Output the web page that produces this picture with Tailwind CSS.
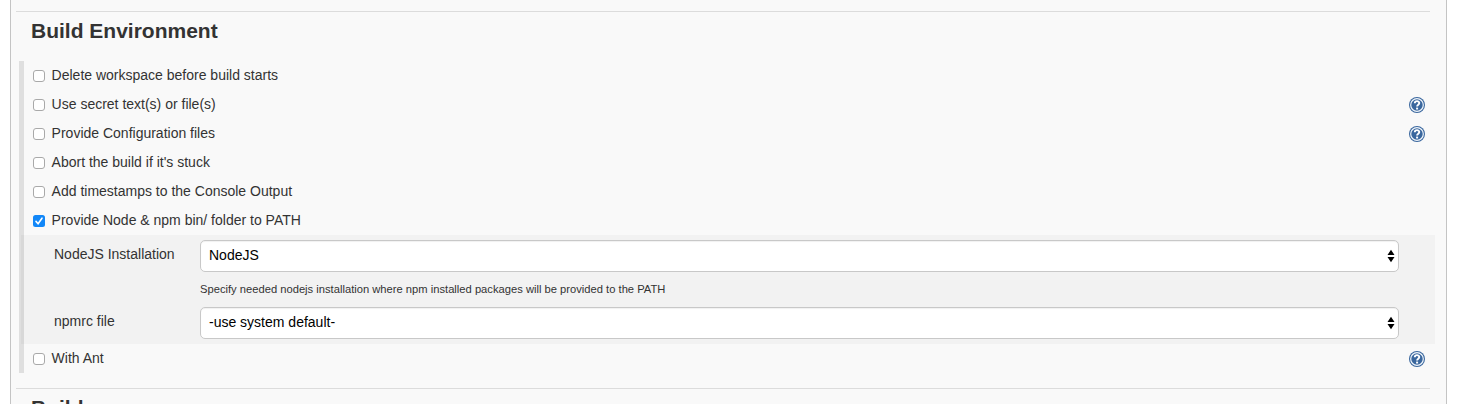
<!DOCTYPE html>
<html lang="en">
<head>
<meta charset="utf-8">
<title>Build Environment</title>
<script src="https://cdn.jsdelivr.net/npm/@tailwindcss/browser@4"></script>
</head>
<body class="bg-white h-[404px] overflow-hidden font-['Liberation_Sans',Arial,sans-serif] text-[14px] text-[#333]">
<svg class="hidden">
  <defs>
    <linearGradient id="blue" x1="0" y1="0" x2="0" y2="1"><stop offset="0" stop-color="#7fa3cb"/><stop offset=".5" stop-color="#3a6aa5"/><stop offset="1" stop-color="#24508c"/></linearGradient>
    <symbol id="help" viewBox="0 0 16 16">
      <circle cx="8" cy="8" r="8" fill="#3a679e"/>
      <circle cx="8" cy="8" r="6.3" fill="url(#blue)" stroke="#f0f5fa" stroke-width="1.2"/>
      <path d="M5.8 6.2C5.8 3.5 10.3 3.5 10.3 6.1C10.3 7.7 8.1 7.7 8.1 9.6" fill="none" stroke="#fff" stroke-width="1.9"/>
      <rect x="7.1" y="10.6" width="2" height="1.9" fill="#fff"/>
    </symbol>
    <symbol id="arrows" viewBox="0 0 8 14"><path d="M4 .8L7.5 6H.5ZM4 13.2L.5 8H7.5Z" fill="#000"/></symbol>
  </defs>
</svg>
<main class="ml-[10px] w-[1437px] h-[404px] overflow-hidden bg-[#f9f9f9] border-x border-[#c4c4c4] pt-[11px]">
  <hr class="ml-[5px] w-[1414px] border-t border-[#dcdcdc]">
  <h2 class="ml-[20px] h-[49px] pt-[7px] text-[21px] leading-[24px] font-bold whitespace-nowrap">Build Environment</h2>
  <section class="ml-[8px] w-[1416px] h-[312px] bg-[linear-gradient(90deg,#dfdfdf_5px,transparent_5px)]">
    <div class="h-[29px] pl-[14px] pr-[10px] flex items-center"><span class="mt-px size-[12px] rounded-[3px] border border-[#a9a9a9] bg-white"></span><label class="ml-[6.6px] flex-1">Delete workspace before build starts</label></div>
    <div class="h-[29px] pl-[14px] pr-[10px] flex items-center"><span class="mt-px size-[12px] rounded-[3px] border border-[#a9a9a9] bg-white"></span><label class="ml-[6.6px] flex-1">Use secret text(s) or file(s)</label><svg class="size-4 mt-px"><use href="#help"/></svg></div>
    <div class="h-[29px] pl-[14px] pr-[10px] flex items-center"><span class="mt-px size-[12px] rounded-[3px] border border-[#a9a9a9] bg-white"></span><label class="ml-[6.6px] flex-1">Provide Configuration files</label><svg class="size-4 mt-px"><use href="#help"/></svg></div>
    <div class="h-[29px] pl-[14px] pr-[10px] flex items-center"><span class="mt-px size-[12px] rounded-[3px] border border-[#a9a9a9] bg-white"></span><label class="ml-[6.6px] flex-1">Abort the build if it's stuck</label></div>
    <div class="h-[29px] pl-[14px] pr-[10px] flex items-center"><span class="mt-px size-[12px] rounded-[3px] border border-[#a9a9a9] bg-white"></span><label class="ml-[6.6px] flex-1">Add timestamps to the Console Output</label></div>
    <div class="h-[29px] pl-[14px] pr-[10px] flex items-center"><svg class="mt-px size-[12px]" viewBox="0 0 12 12"><rect width="12" height="12" rx="2.5" fill="#1287f8"/><path d="M3 6.4L5.1 8.8L9 3.2" fill="none" stroke="#fff" stroke-width="1.6" stroke-linecap="round"/></svg><label class="ml-[6.6px] flex-1">Provide Node &amp; npm bin/ folder to PATH</label></div>
    <div class="ml-[2px] h-[109px] bg-black/[.027] pl-[33px] pr-[36px] pt-[5px]">
      <div class="flex h-[32px]"><div class="w-[146px] pt-[4px]">NodeJS Installation</div><div class="flex-1 bg-white border border-[#c8c8c8] rounded-[5px] flex items-center justify-between pl-[8px] pr-[3px] text-black shadow-[inset_0_1px_1px_rgba(0,0,0,.06)]"><span class="pb-[2px]">NodeJS</span><svg class="w-[8px] h-[14px]"><use href="#arrows"/></svg></div></div>
      <div class="ml-[146px] h-[35px] pt-[10px] text-[11.2px] leading-[15px]">Specify needed nodejs installation where npm installed packages will be provided to the PATH</div>
      <div class="flex h-[32px]"><div class="w-[146px] pt-[4px]">npmrc file</div><div class="flex-1 bg-white border border-[#c8c8c8] rounded-[5px] flex items-center justify-between pl-[8px] pr-[3px] text-black shadow-[inset_0_1px_1px_rgba(0,0,0,.06)]"><span class="pb-[2px]">-use system default-</span><svg class="w-[8px] h-[14px]"><use href="#arrows"/></svg></div></div>
    </div>
    <div class="h-[29px] pl-[14px] pr-[10px] flex items-center"><span class="mt-px size-[12px] rounded-[3px] border border-[#a9a9a9] bg-white"></span><label class="ml-[6.6px] flex-1">With Ant</label><svg class="size-4 mt-px"><use href="#help"/></svg></div>
  </section>
  <hr class="mt-[15px] ml-[5px] w-[1414px] border-t border-[#dcdcdc]">
  <h2 class="ml-[20px] pt-[7px] text-[21px] leading-[24px] font-bold">Build</h2>
</main>
</body>
</html>
